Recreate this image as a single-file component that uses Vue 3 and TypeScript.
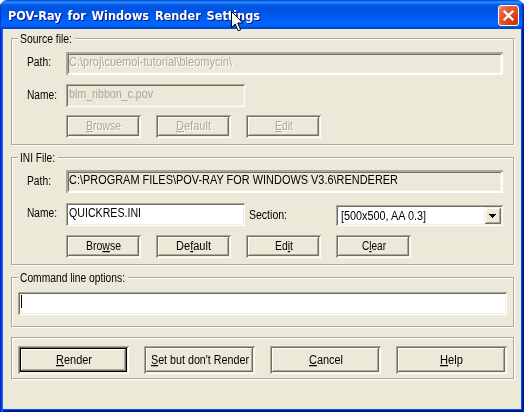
<script setup lang="ts">
import { h } from 'vue'

interface LabelProps {
  text: string
  w: number
  u?: number
}

// A caption fitted to a fixed width; `u` is the index of its mnemonic letter.
const Caption = (props: LabelProps) => {
  const { text, w } = props
  const u = props.u ?? -1
  const content =
    u < 0
      ? text
      : [text.slice(0, u), h('tspan', { class: 'mnemonic' }, text[u]), text.slice(u + 1)]
  return h('svg', { class: 'caption', width: w, height: 15 }, [
    h('text', { x: 0, y: 12, textLength: w, lengthAdjust: 'spacingAndGlyphs' }, content),
  ])
}
Caption.props = ['text', 'w', 'u']

const sourceButtons: LabelProps[] = [
  { text: 'Browse', w: 35, u: 0 },
  { text: 'Default', w: 35, u: 0 },
  { text: 'Edit', w: 18, u: 0 },
]
const iniButtons: LabelProps[] = [
  { text: 'Browse', w: 35, u: 3 },
  { text: 'Default', w: 35, u: 2 },
  { text: 'Edit', w: 18, u: 2 },
  { text: 'Clear', w: 24, u: 1 },
]
const actions: LabelProps[] = [
  { text: 'Render', w: 36, u: 0 },
  { text: "Set but don't Render", w: 98, u: 0 },
  { text: 'Cancel', w: 34, u: 0 },
  { text: 'Help', w: 23, u: 0 },
]
</script>

<template>
  <div class="window">
    <header class="titlebar">
      <Caption class="title" text="POV-Ray for Windows Render Settings" :w="252" />
      <button class="close" aria-label="Close">
        <svg width="19" height="19" viewBox="0 0 19 19">
          <path d="M4.7 4.7 14.3 14.3M14.3 4.7 4.7 14.3" stroke="#fff" stroke-width="2.3" />
        </svg>
      </button>
    </header>

    <main class="client">
      <section class="group source">
        <div class="legend"><Caption text="Source file:" :w="52" /></div>
        <div class="row">
          <Caption class="name" text="Path:" :w="24" />
          <div class="field deep etched"><Caption text="C:\proj\cuemol-tutorial\bleomycin\" :w="163" /></div>
        </div>
        <div class="row second">
          <Caption class="name low" text="Name:" :w="30" />
          <div class="field short off"><Caption text="blm_ribbon_c.pov" :w="84" /></div>
        </div>
        <div class="buttons">
          <button v-for="b in sourceButtons" :key="b.text" class="btn etched"><Caption v-bind="b" /></button>
        </div>
      </section>

      <section class="group ini">
        <div class="legend"><Caption text="INI File:" :w="35" /></div>
        <div class="row">
          <Caption class="name low" text="Path:" :w="24" />
          <div class="field deep"><Caption text="C:\PROGRAM FILES\POV-RAY FOR WINDOWS V3.6\RENDERER" :w="329" /></div>
        </div>
        <div class="row third">
          <Caption class="name" text="Name:" :w="30" />
          <div class="field short white"><Caption text="QUICKRES.INI" :w="72" /></div>
          <Caption class="section" text="Section:" :w="38" />
          <div class="combo">
            <Caption text="[500x500, AA 0.3]" :w="85" />
            <span class="drop">
              <svg width="7" height="4" viewBox="0 0 7 4" shape-rendering="crispEdges">
                <path d="M0 0h7v1H0zM1 1h5v1H1zM2 2h3v1H2zM3 3h1v1H3z" />
              </svg>
            </span>
          </div>
        </div>
        <div class="buttons">
          <button v-for="b in iniButtons" :key="b.text" class="btn"><Caption v-bind="b" /></button>
        </div>
      </section>

      <section class="group command">
        <div class="legend"><Caption text="Command line options:" :w="105" /></div>
        <div class="field white line"><i class="caret"></i></div>
      </section>

      <section class="group actions">
        <button v-for="(b, i) in actions" :key="b.text" class="btn large" :class="{ primary: i === 0 }">
          <Caption v-bind="b" />
        </button>
      </section>
    </main>

    <svg class="cursor" width="13" height="21" viewBox="0 0 13 21">
      <path d="M.5.5v16l3.7-3.5 3 6.8 2.5-1-3-6.8h5.1z" fill="#fff" stroke="#000" />
    </svg>
  </div>
</template>

<style>
body {
  background: #fff;
}
.caption {
  display: block;
  flex: none;
  overflow: visible;
  font: 12.3px 'Liberation Sans', Arial, sans-serif;
  fill: #000;
  opacity: 0.999;
}
.caption text {
  white-space: pre;
}
.mnemonic {
  text-decoration: underline;
}
</style>

<style scoped>
.window {
  position: relative;
  box-sizing: border-box;
  width: 524px;
  height: 412px;
  display: flex;
  flex-direction: column;
  overflow: hidden;
  background: #ece9d8;
  border-radius: 7px 7px 0 0;
}
.titlebar {
  box-sizing: border-box;
  height: 29px;
  flex: none;
  display: flex;
  justify-content: space-between;
  padding: 5px 5px 0 8px;
  background: linear-gradient(#0058e0 0, #0058e0 1px, #3c93ff 2px, #2484fb 3px, #0662ee 4px, #0054e3 7px, #0055e5 13px, #005cf4 18px, #0066ff 23px, #0064fc 26px, #0050dc 27px, #0041c8 29px);
  box-shadow: inset 1px 0 #0040c8, inset -1px 0 #0020a0, inset -2px 0 #0038c8;
}
.title {
  margin-top: 3px;
  font: bold 12px 'DejaVu Sans', Verdana, sans-serif;
  word-spacing: 2px;
  fill: #fff;
  filter: drop-shadow(1px 1px 0 #0a1883);
}
.close {
  box-sizing: border-box;
  width: 21px;
  height: 21px;
  padding: 0;
  border: 1px solid #fff;
  border-radius: 3px;
  background: radial-gradient(circle at 90% 90%, #c93408 0, #e0481f 45%, #e5653f 75%, #ee9275 100%);
}
.close svg {
  display: block;
}
.client {
  box-sizing: border-box;
  flex: 1;
  display: flex;
  flex-direction: column;
  padding: 9px 10px 0 11px;
  box-shadow: inset 1px 0 #0024d2, inset 2px 0 #0841dc, inset 3px 0 #1268ee,
    inset 0 -1px #00138c, inset 0 -2px #001ea0, inset -1px 0 #00138c, inset -2px 0 #001ea0,
    inset 0 -3px #0455dd, inset -3px 0 #0455dd;
}
.group {
  box-sizing: border-box;
  width: 503px;
  padding-left: 6px;
  border: 1px solid #aca899;
  box-shadow: 1px 1px #fff, inset 1px 1px #fff;
}
.source {
  height: 107px;
}
.ini {
  height: 108px;
  margin-top: 12px;
}
.command {
  height: 50px;
  margin-top: 12px;
}
.group.actions {
  height: 42px;
  margin-top: 10px;
  padding-top: 8px;
  display: flex;
  gap: 15px;
}
.legend {
  width: fit-content;
  margin-top: -8px;
  padding: 0 3px 0 2px;
  background: #ece9d8;
}
.row {
  display: grid;
  grid-template-columns: 48px 179px 91px 167px;
  align-items: start;
  height: 23px;
  margin-top: 6px;
}
.ini .row {
  margin-top: 5px;
}
.row.second {
  margin-top: 9px;
}
.ini .row.third {
  margin-top: 10px;
}
.name {
  margin: 2px 0 0 9px;
}
.name.low {
  margin-top: 3px;
}
.section {
  margin: 4px 0 0 4px;
}
.field {
  box-sizing: border-box;
  height: 23px;
  padding: 2px 0 0 3px;
  box-shadow: inset 1px 1px #aca899, inset -1px -1px #fff, inset 2px 2px #716f64, inset -2px -2px #f1efe2;
}
.field.deep {
  grid-column: 2 / -1;
  width: 437px;
  box-shadow: inset 2px 2px #aca899, inset -2px -2px #fff, inset 3px 3px #716f64, inset -3px -3px #f1efe2;
}
.white {
  background: #fff;
}
.off .caption {
  fill: #aca899;
}
.etched .caption {
  fill: #aca899;
  filter: drop-shadow(1px 1px 0 #fff);
}
.line {
  width: 489px;
  margin-top: 7px;
  padding-top: 3px;
}
.caret {
  display: block;
  width: 1px;
  height: 13px;
  background: #000;
}
.combo {
  box-sizing: border-box;
  display: flex;
  justify-content: space-between;
  height: 21px;
  margin-top: 2px;
  padding: 2px 2px 2px 5px;
  background: #fff;
  box-shadow: inset 1px 1px #aca899, inset -1px -1px #fff, inset 2px 2px #716f64, inset -2px -2px #f1efe2;
}
.combo .caption {
  margin-top: 1px;
}
.drop {
  display: flex;
  align-items: center;
  justify-content: center;
  width: 17px;
  height: 17px;
  background: #ece9d8;
  box-shadow: inset 1px 1px #f1efe2, inset -1px -1px #716f64, inset 2px 2px #fff, inset -2px -2px #aca899;
}
.drop svg {
  margin-right: 1px;
}
.buttons {
  display: flex;
  gap: 15px;
  margin: 8px 0 0 48px;
}
.ini .buttons {
  margin-top: 9px;
}
.btn {
  box-sizing: border-box;
  display: flex;
  justify-content: center;
  width: 75px;
  height: 23px;
  padding: 3px 0 0;
  border: 0;
  background: #ece9d8;
  box-shadow: inset 1px 1px #aca899, inset -1px -1px #fff, inset 2px 2px #716f64, inset -2px -2px #f1efe2,
    inset -3px -3px #716f64, inset 3px 3px #fff, inset -4px -4px #aca899;
}
.btn.large {
  width: 111px;
  height: 28px;
  padding-top: 6px;
}
.btn.primary {
  box-shadow: inset 1px 1px #aca899, inset -1px -1px #fff, inset 2px 2px #716f64, inset -2px -2px #f1efe2,
    inset 3px 3px #000, inset -3px -3px #000, inset -4px -4px #716f64, inset 4px 4px #fff, inset -5px -5px #aca899;
}
.cursor {
  position: absolute;
  left: 231px;
  top: 11px;
}
</style>
